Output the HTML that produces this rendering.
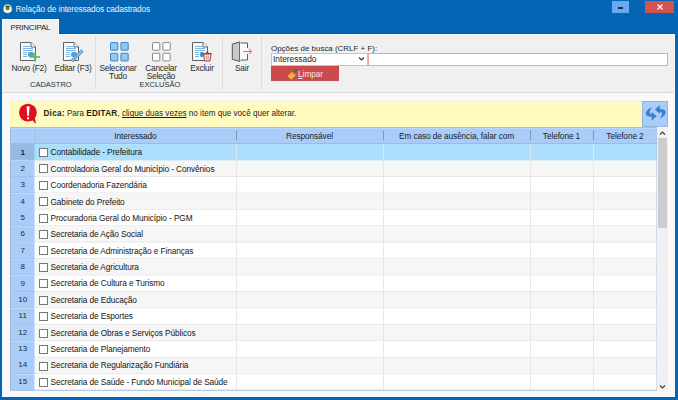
<!DOCTYPE html>
<html><head><meta charset="utf-8">
<style>
*{margin:0;padding:0;box-sizing:border-box}
html,body{width:678px;height:400px;overflow:hidden;background:#0565B5;font-family:"Liberation Sans",sans-serif;font-size:8px;color:#333}
.a{position:absolute}
.t{position:absolute;white-space:nowrap;line-height:1}
#title{left:15.5px;top:4.6px;color:#E8F2FC;font-size:8.3px;letter-spacing:-0.12px}
#minb{left:612px;top:1px;width:17px;height:12px;background:#69A9EE}
#minb i{position:absolute;left:6px;top:6px;width:5px;height:2px;background:#17304F}
#clsb{left:645px;top:1px;width:29px;height:12px;background:#D4534E}
#tab{left:2px;top:19px;width:57px;height:17px;background:#F0F0F0;border:1px solid #FAFCFE;border-bottom:none;z-index:2}
#tab span{position:absolute;left:7.5px;top:2.8px;font-size:8px;color:#1E1A22;letter-spacing:-0.2px}
#ribbon{left:2px;top:34px;width:673px;height:59px;background:#F0F0F0;border-top:1px solid #F0FAFF;border-bottom:1px solid #DADADA}
#content{left:2px;top:93px;width:673px;height:304px;background:#F8F8F8}
.sep{position:absolute;top:36px;width:1px;height:53px;background:#DCDCDC}
.lbl{position:absolute;font-size:8.3px;letter-spacing:-0.2px;color:#2A2A2A;text-align:center;line-height:8px;white-space:nowrap}
.grp{position:absolute;font-size:7.5px;color:#2E2E2E;white-space:nowrap;line-height:1}
#tip{left:10px;top:101px;width:632px;height:26px;background:#FFFBC0;border-top:1px solid #F8F1D6}
#tiptext{left:43.5px;top:110.3px;font-size:8.15px;color:#1E1E1E}
#refresh{left:642px;top:101px;width:26px;height:25.5px;background:#AACDF7;border:1px solid #91B5E0}
#grid{left:10px;top:127px;width:647px;height:263.5px;background:#fff;border:1px solid #A3BEDF}
.hd{position:absolute;top:128px;height:15.5px;background:#A8CCF6;border-bottom:1px solid #8DB3E2}
.ht{position:absolute;top:131.7px;font-size:8.3px;letter-spacing:-0.1px;color:#1E1E28;white-space:nowrap;line-height:1;text-align:center}
.hsep{position:absolute;top:130px;width:1px;height:11px;background:#7F9FC6}
.row{position:absolute;left:11px;width:645px;height:16.4px}
.rn{left:11px;width:23.5px;text-align:center;font-size:8px;color:#1A283C}
.cb{position:absolute;left:39px;width:9px;height:9px;border:1px solid #777;background:#fff}
.rt{left:50.5px;font-size:8.3px;letter-spacing:-0.1px;color:#141414}
.vl{position:absolute;top:143.5px;width:1px;height:246px;background:#E4E4E4}
#sb{left:657px;top:127.5px;width:11px;height:263px;background:#F0F0F0}
#thumb{left:658px;top:138px;width:8.5px;height:90px;background:#CDCDCD}
</style></head><body>
<!-- title bar -->
<svg class="a" style="left:2px;top:3px" width="12" height="12" viewBox="0 0 12 12">
 <circle cx="5.6" cy="5.6" r="4.5" fill="#F3EFD8" stroke="#2E9E86" stroke-width="1"/>
 <path d="M1.6 7.2 Q5.6 5.2 9.6 7.2 L9.4 8.6 Q5.6 11 1.8 8.6Z" fill="#FFFFFF"/>
 <circle cx="5.6" cy="5.4" r="1.9" fill="#8A6A3E"/>
 <path d="M3 3.6 Q5.6 1.6 8.4 3.6 L7.6 4.2 H3.6Z" fill="#2F5A3A"/>
</svg>
<div id="title" class="t">Relação de interessados cadastrados</div>
<div id="minb" class="a"><i></i></div>
<div id="clsb" class="a"><svg class="a" style="left:11.5px;top:3px" width="6" height="6" viewBox="0 0 6 6"><path d="M0.5 0.5L5.5 5.5M5.5 0.5L0.5 5.5" stroke="#fff" stroke-width="1.2"/></svg></div>

<div id="tab" class="a"><span>PRINCIPAL</span></div>
<div class="a" style="left:59px;top:33px;width:616px;height:1px;background:#0A58A6"></div>
<div id="ribbon" class="a"></div>
<div id="content" class="a"></div>

<!-- ribbon separators -->
<div class="sep" style="left:95px"></div>
<div class="sep" style="left:222px"></div>
<div class="sep" style="left:261px"></div>

<!-- Novo icon -->
<svg class="a" style="left:18px;top:40px" width="24" height="24" viewBox="0 0 24 24">
 <path d="M2.5 2.5 H13 L17.5 7 V20.5 H2.5 Z" fill="#F9F9F9" stroke="#626262" stroke-width="1"/>
 <path d="M13 2.5 V7 H17.5" fill="#fff" stroke="#626262" stroke-width="1"/>
 <path d="M5 6.5H12M5 8.5H15M5 10.5H15M5 12.5H9M5 14.5H9M5 16.5H9" stroke="#7DB7E3" stroke-width="1"/>
 <rect x="10" y="12" width="6" height="5" rx="2" fill="#5B9BD6"/>
 <path d="M12 17H22M17 12.5V21.5" stroke="#45B853" stroke-width="1.4"/>
</svg>
<div class="lbl" style="left:0;width:58px;top:63.5px">Novo (F2)</div>
<!-- Editar icon -->
<svg class="a" style="left:61px;top:40px" width="26" height="24" viewBox="0 0 26 24">
 <path d="M2.5 2.5 H13 L17.5 7 V20.5 H2.5 Z" fill="#F9F9F9" stroke="#626262" stroke-width="1"/>
 <path d="M13 2.5 V7 H17.5" fill="#fff" stroke="#626262" stroke-width="1"/>
 <path d="M5 6.5H12M5 8.5H15M5 10.5H15M5 12.5H9M5 14.5H9M5 16.5H9" stroke="#7DB7E3" stroke-width="1"/>
 <rect x="10" y="12" width="6" height="5" rx="2" fill="#5B9BD6"/>
 <path d="M11 21 L21.5 10.5" stroke="#4A90C8" stroke-width="3.2"/>
 <path d="M11 21 L21.5 10.5" stroke="#8CCBEF" stroke-width="1.6"/>
</svg>
<div class="lbl" style="left:44px;width:58px;top:63.5px">Editar (F3)</div>
<div class="grp" style="left:30px;top:81px">CADASTRO</div>

<!-- Selecionar tudo -->
<svg class="a" style="left:108px;top:41px" width="22" height="22" viewBox="0 0 22 22">
 <rect x="2.5" y="1.6" width="7.3" height="7.6" rx="0.6" fill="#8ECAF4" stroke="#3C85C2"/>
 <rect x="12.9" y="1.6" width="7.3" height="7.6" rx="0.6" fill="#8ECAF4" stroke="#3C85C2"/>
 <rect x="2.5" y="12.3" width="7.3" height="7.6" rx="0.6" fill="#8ECAF4" stroke="#3C85C2"/>
 <rect x="12.9" y="12.3" width="7.3" height="7.6" rx="0.6" fill="#8ECAF4" stroke="#3C85C2"/>
</svg>
<div class="lbl" style="left:89px;width:58px;top:63.5px">Selecionar<br>Tudo</div>
<!-- Cancelar selecao -->
<svg class="a" style="left:150px;top:41px" width="22" height="22" viewBox="0 0 22 22">
 <rect x="2.5" y="1.6" width="7.3" height="7.6" rx="0.6" fill="#FFFFFF" stroke="#8A8A8A"/>
 <rect x="12.9" y="1.6" width="7.3" height="7.6" rx="0.6" fill="#FFFFFF" stroke="#8A8A8A"/>
 <rect x="2.5" y="12.3" width="7.3" height="7.6" rx="0.6" fill="#FFFFFF" stroke="#8A8A8A"/>
 <rect x="12.9" y="12.3" width="7.3" height="7.6" rx="0.6" fill="#FFFFFF" stroke="#8A8A8A"/>
</svg>
<div class="lbl" style="left:132px;width:58px;top:63.5px">Cancelar<br>Seleção</div>
<!-- Excluir -->
<svg class="a" style="left:190px;top:40px" width="24" height="24" viewBox="0 0 24 24">
 <path d="M2.5 2.5 H13 L17.5 7 V20.5 H2.5 Z" fill="#F9F9F9" stroke="#626262" stroke-width="1"/>
 <path d="M13 2.5 V7 H17.5" fill="#fff" stroke="#626262" stroke-width="1"/>
 <path d="M5 6.5H12M5 8.5H15M5 10.5H15M5 12.5H9M5 14.5H9M5 16.5H9" stroke="#7DB7E3" stroke-width="1"/>
 <rect x="10" y="12" width="4" height="5" rx="1.5" fill="#4C8FCF"/>
 <path d="M13.5 14 H21 L20 21 H14.5 Z" fill="#F6E8E8" stroke="#A83A3A" stroke-width="1"/>
 <path d="M12.8 13.5 H21.7 M16 12.3 H18.5" stroke="#A83A3A" stroke-width="1"/>
 <path d="M16.3 15.5V19.5M18.2 15.5V19.5" stroke="#C87070" stroke-width="0.8"/>
</svg>
<div class="lbl" style="left:173px;width:58px;top:63.5px">Excluir</div>
<div class="grp" style="left:139.5px;top:81px">EXCLUSÃO</div>

<!-- Sair -->
<svg class="a" style="left:230px;top:40px" width="24" height="24" viewBox="0 0 24 24">
 <path d="M2.3 4.2 L9.7 1.9 V21.4 L2.3 19.4 Z" fill="#C9C9C9" stroke="#555" stroke-width="1"/>
 <rect x="10" y="3" width="7.5" height="17" fill="#FBFBFB"/>
 <path d="M10.6 3 H17.5 V8 M17.5 14 V20 H10.6" fill="none" stroke="#5E5E5E" stroke-width="1"/>
 <path d="M13 11.5 H21.5 M19 9 L21.8 11.5 L19 14" fill="none" stroke="#E2596A" stroke-width="0.9"/>
</svg>
<div class="lbl" style="left:213px;width:58px;top:63.5px">Sair</div>

<!-- search -->
<div class="t" style="left:271px;top:45.3px;font-size:7.95px;color:#262626">Opções de busca (CRLF + F):</div>
<div class="a" style="left:271px;top:53px;width:96.5px;height:12.5px;background:#fff;border:1px solid #A9C7E6"></div>
<div class="t" style="left:273px;top:55.3px;font-size:8.3px;color:#1A1A1A">Interessado</div>
<svg class="a" style="left:358px;top:56px" width="7" height="6" viewBox="0 0 7 6"><path d="M1 1.5 L3.5 4 L6 1.5" fill="none" stroke="#333" stroke-width="1.1"/></svg>
<div class="a" style="left:368px;top:53px;width:299.5px;height:12.5px;background:#fff;border:1px solid #EDA3A3"></div>
<div class="a" style="left:271px;top:66px;width:68px;height:15px;background:#CB4B4D"></div>
<svg class="a" style="left:286px;top:67px" width="12" height="13" viewBox="0 0 12 13">
 <path d="M8 5.5 L10.6 2.2" stroke="#5C5C5C" stroke-width="1.8" fill="none"/>
 <path d="M1.4 9.2 L5.8 5 L9.6 8.2 L5.6 12.4 Z" fill="#F4B142"/>
 <path d="M5.8 5 L9.6 8.2" stroke="#D9922E" stroke-width="1.2"/>
</svg>
<div class="t" style="left:298px;top:70.5px;font-size:8.2px;color:#FBE6E6"><u>L</u>impar</div>

<!-- tip -->
<div id="tip" class="a"></div>
<svg class="a" style="left:18px;top:103px" width="20" height="22" viewBox="0 0 20 22">
 <circle cx="9.9" cy="9.6" r="8.9" fill="#DE0F1E"/>
 <path d="M13 16 L18 21 L16.8 14 Z" fill="#DE0F1E"/>
 <path d="M8.6 3.2 H11.6 L10.9 13 H9.3 Z" fill="#fff"/>
 <rect x="9.1" y="14.3" width="2" height="2" fill="#fff"/>
</svg>
<div id="tiptext" class="t"><b style="letter-spacing:0.25px">Dica:</b> Para <b style="letter-spacing:0.25px">EDITAR</b>, <u>clique duas vezes</u> no item que você quer alterar.</div>
<div id="refresh" class="a"></div>
<svg class="a" style="left:644px;top:104px" width="24" height="20" viewBox="0 0 24 20">
 <g id="arr"><path d="M7.8 3.2 Q2 5.6 1.8 9.5 Q1.9 12.8 7.6 12.8 L7.8 16.8 L12.6 12 L7.6 8 L7.6 9.9 Q5.5 9.9 5.5 8.4 Q5.6 6.3 7.8 3.2 Z" fill="#3A81CE"/></g>
 <use href="#arr" transform="rotate(180 11.75 8.9)"/>
</svg>

<!-- grid -->
<svg class="a" style="left:0;top:0" width="678" height="400" viewBox="0 0 678 400">
<rect x="10.5" y="127.5" width="646" height="263" fill="#fff" stroke="#A6C0DF" stroke-width="1"/>
<rect x="11" y="128" width="645.5" height="15.10" fill="#A9CDF8"/>
<rect x="11" y="128" width="645.5" height="1" fill="#B9D7FA"/>
<rect x="11" y="143.10" width="645.5" height="1" fill="#90B5E2"/>
<rect x="34.5" y="130.5" width="1" height="10" fill="#9DBDE3"/>
<rect x="236" y="130.5" width="1" height="10" fill="#7898C2"/>
<rect x="383" y="130.5" width="1" height="10" fill="#7898C2"/>
<rect x="530" y="130.5" width="1" height="10" fill="#7898C2"/>
<rect x="593" y="130.5" width="1" height="10" fill="#7898C2"/>
<rect x="11" y="144.10" width="645.5" height="16.44" fill="#AADEFB"/>
<rect x="11" y="144.10" width="23.5" height="16.44" fill="#94B9E4"/>
<rect x="34.5" y="159.54" width="622" height="1" fill="#B5DCF0"/>
<rect x="11" y="159.54" width="23.5" height="1" fill="#9EC2EC"/>
<rect x="11" y="160.54" width="645.5" height="16.44" fill="#F6F6F6"/>
<rect x="11" y="160.54" width="23.5" height="16.44" fill="#A9CDF8"/>
<rect x="34.5" y="175.98" width="622" height="1" fill="#E7E7E7"/>
<rect x="11" y="175.98" width="23.5" height="1" fill="#9EC2EC"/>
<rect x="11" y="176.98" width="645.5" height="16.44" fill="#FFFFFF"/>
<rect x="11" y="176.98" width="23.5" height="16.44" fill="#A9CDF8"/>
<rect x="34.5" y="192.42" width="622" height="1" fill="#E7E7E7"/>
<rect x="11" y="192.42" width="23.5" height="1" fill="#9EC2EC"/>
<rect x="11" y="193.42" width="645.5" height="16.44" fill="#F6F6F6"/>
<rect x="11" y="193.42" width="23.5" height="16.44" fill="#A9CDF8"/>
<rect x="34.5" y="208.86" width="622" height="1" fill="#E7E7E7"/>
<rect x="11" y="208.86" width="23.5" height="1" fill="#9EC2EC"/>
<rect x="11" y="209.86" width="645.5" height="16.44" fill="#FFFFFF"/>
<rect x="11" y="209.86" width="23.5" height="16.44" fill="#A9CDF8"/>
<rect x="34.5" y="225.30" width="622" height="1" fill="#E7E7E7"/>
<rect x="11" y="225.30" width="23.5" height="1" fill="#9EC2EC"/>
<rect x="11" y="226.30" width="645.5" height="16.44" fill="#F6F6F6"/>
<rect x="11" y="226.30" width="23.5" height="16.44" fill="#A9CDF8"/>
<rect x="34.5" y="241.74" width="622" height="1" fill="#E7E7E7"/>
<rect x="11" y="241.74" width="23.5" height="1" fill="#9EC2EC"/>
<rect x="11" y="242.74" width="645.5" height="16.44" fill="#FFFFFF"/>
<rect x="11" y="242.74" width="23.5" height="16.44" fill="#A9CDF8"/>
<rect x="34.5" y="258.18" width="622" height="1" fill="#E7E7E7"/>
<rect x="11" y="258.18" width="23.5" height="1" fill="#9EC2EC"/>
<rect x="11" y="259.18" width="645.5" height="16.44" fill="#F6F6F6"/>
<rect x="11" y="259.18" width="23.5" height="16.44" fill="#A9CDF8"/>
<rect x="34.5" y="274.62" width="622" height="1" fill="#E7E7E7"/>
<rect x="11" y="274.62" width="23.5" height="1" fill="#9EC2EC"/>
<rect x="11" y="275.62" width="645.5" height="16.44" fill="#FFFFFF"/>
<rect x="11" y="275.62" width="23.5" height="16.44" fill="#A9CDF8"/>
<rect x="34.5" y="291.06" width="622" height="1" fill="#E7E7E7"/>
<rect x="11" y="291.06" width="23.5" height="1" fill="#9EC2EC"/>
<rect x="11" y="292.06" width="645.5" height="16.44" fill="#F6F6F6"/>
<rect x="11" y="292.06" width="23.5" height="16.44" fill="#A9CDF8"/>
<rect x="34.5" y="307.50" width="622" height="1" fill="#E7E7E7"/>
<rect x="11" y="307.50" width="23.5" height="1" fill="#9EC2EC"/>
<rect x="11" y="308.50" width="645.5" height="16.44" fill="#FFFFFF"/>
<rect x="11" y="308.50" width="23.5" height="16.44" fill="#A9CDF8"/>
<rect x="34.5" y="323.94" width="622" height="1" fill="#E7E7E7"/>
<rect x="11" y="323.94" width="23.5" height="1" fill="#9EC2EC"/>
<rect x="11" y="324.94" width="645.5" height="16.44" fill="#F6F6F6"/>
<rect x="11" y="324.94" width="23.5" height="16.44" fill="#A9CDF8"/>
<rect x="34.5" y="340.38" width="622" height="1" fill="#E7E7E7"/>
<rect x="11" y="340.38" width="23.5" height="1" fill="#9EC2EC"/>
<rect x="11" y="341.38" width="645.5" height="16.44" fill="#FFFFFF"/>
<rect x="11" y="341.38" width="23.5" height="16.44" fill="#A9CDF8"/>
<rect x="34.5" y="356.82" width="622" height="1" fill="#E7E7E7"/>
<rect x="11" y="356.82" width="23.5" height="1" fill="#9EC2EC"/>
<rect x="11" y="357.82" width="645.5" height="16.44" fill="#F6F6F6"/>
<rect x="11" y="357.82" width="23.5" height="16.44" fill="#A9CDF8"/>
<rect x="34.5" y="373.26" width="622" height="1" fill="#E7E7E7"/>
<rect x="11" y="373.26" width="23.5" height="1" fill="#9EC2EC"/>
<rect x="11" y="374.26" width="645.5" height="16.44" fill="#FFFFFF"/>
<rect x="11" y="374.26" width="23.5" height="16.44" fill="#A9CDF8"/>
<rect x="236" y="144.10" width="1" height="245.60" fill="#E6E6E6" fill-opacity="0.9"/>
<rect x="383" y="144.10" width="1" height="245.60" fill="#E6E6E6" fill-opacity="0.9"/>
<rect x="530" y="144.10" width="1" height="245.60" fill="#E6E6E6" fill-opacity="0.9"/>
<rect x="593" y="144.10" width="1" height="245.60" fill="#E6E6E6" fill-opacity="0.9"/>
<rect x="10.5" y="389.70" width="646.5" height="1" fill="#A6C0DF"/>
<rect x="10" y="127.5" width="1" height="263" fill="#9FBADB"/>
</svg>
<div class="ht" style="left:35px;width:201px">Interessado</div>
<div class="ht" style="left:236px;width:147px">Responsável</div>
<div class="ht" style="left:383px;width:147px">Em caso de ausência, falar com</div>
<div class="ht" style="left:530px;width:63px">Telefone 1</div>
<div class="ht" style="left:593px;width:64px">Telefone 2</div>
<div class="t rn" style="top:148.50px;font-weight:bold">1</div>
<div class="cb" style="top:147.80px"></div>
<div class="t rt" style="top:148.40px">Contabilidade - Prefeitura</div>
<div class="t rn" style="top:164.88px;font-weight:normal">2</div>
<div class="cb" style="top:164.24px"></div>
<div class="t rt" style="top:164.78px">Controladoria Geral do Município - Convênios</div>
<div class="t rn" style="top:181.26px;font-weight:normal">3</div>
<div class="cb" style="top:180.68px"></div>
<div class="t rt" style="top:181.16px">Coordenadoria Fazendária</div>
<div class="t rn" style="top:197.64px;font-weight:normal">4</div>
<div class="cb" style="top:197.12px"></div>
<div class="t rt" style="top:197.54px">Gabinete do Prefeito</div>
<div class="t rn" style="top:214.02px;font-weight:normal">5</div>
<div class="cb" style="top:213.56px"></div>
<div class="t rt" style="top:213.92px">Procuradoria Geral do Município - PGM</div>
<div class="t rn" style="top:230.40px;font-weight:normal">6</div>
<div class="cb" style="top:230.00px"></div>
<div class="t rt" style="top:230.30px">Secretaria de Ação Social</div>
<div class="t rn" style="top:246.78px;font-weight:normal">7</div>
<div class="cb" style="top:246.44px"></div>
<div class="t rt" style="top:246.68px">Secretaria de Administração e Finanças</div>
<div class="t rn" style="top:263.16px;font-weight:normal">8</div>
<div class="cb" style="top:262.88px"></div>
<div class="t rt" style="top:263.06px">Secretaria de Agricultura</div>
<div class="t rn" style="top:279.54px;font-weight:normal">9</div>
<div class="cb" style="top:279.32px"></div>
<div class="t rt" style="top:279.44px">Secretaria de Cultura e Turismo</div>
<div class="t rn" style="top:295.92px;font-weight:normal">10</div>
<div class="cb" style="top:295.76px"></div>
<div class="t rt" style="top:295.82px">Secretaria de Educação</div>
<div class="t rn" style="top:312.30px;font-weight:normal">11</div>
<div class="cb" style="top:312.20px"></div>
<div class="t rt" style="top:312.20px">Secretaria de Esportes</div>
<div class="t rn" style="top:328.68px;font-weight:normal">12</div>
<div class="cb" style="top:328.64px"></div>
<div class="t rt" style="top:328.58px">Secretaria de Obras e Serviços Públicos</div>
<div class="t rn" style="top:345.06px;font-weight:normal">13</div>
<div class="cb" style="top:345.08px"></div>
<div class="t rt" style="top:344.96px">Secretaria de Planejamento</div>
<div class="t rn" style="top:361.44px;font-weight:normal">14</div>
<div class="cb" style="top:361.52px"></div>
<div class="t rt" style="top:361.34px">Secretaria de Regularização Fundiária</div>
<div class="t rn" style="top:377.82px;font-weight:normal">15</div>
<div class="cb" style="top:377.96px"></div>
<div class="t rt" style="top:377.72px">Secretaria de Saúde - Fundo Municipal de Saúde</div>
<div id="sb" class="a"></div>
<svg class="a" style="left:659px;top:130px" width="7" height="6" viewBox="0 0 7 6"><path d="M1 4.5 L3.5 2 L6 4.5" fill="none" stroke="#444" stroke-width="1.2"/></svg>
<div id="thumb" class="a"></div>
<svg class="a" style="left:659px;top:383.5px" width="7" height="6" viewBox="0 0 7 6"><path d="M1 1.5 L3.5 4 L6 1.5" fill="none" stroke="#444" stroke-width="1.2"/></svg>
<div class="a" style="left:668px;top:93px;width:6px;height:304px;background:#FAFAFA"></div>
<div class="a" style="left:2px;top:34px;width:1px;height:363px;background:#F2F8FD"></div>
<div class="a" style="left:2px;top:396px;width:673px;height:1px;background:#FFFFFF"></div>
<div class="a" style="left:674px;top:34px;width:1px;height:363px;background:#FFFFFF"></div>
</body></html>
